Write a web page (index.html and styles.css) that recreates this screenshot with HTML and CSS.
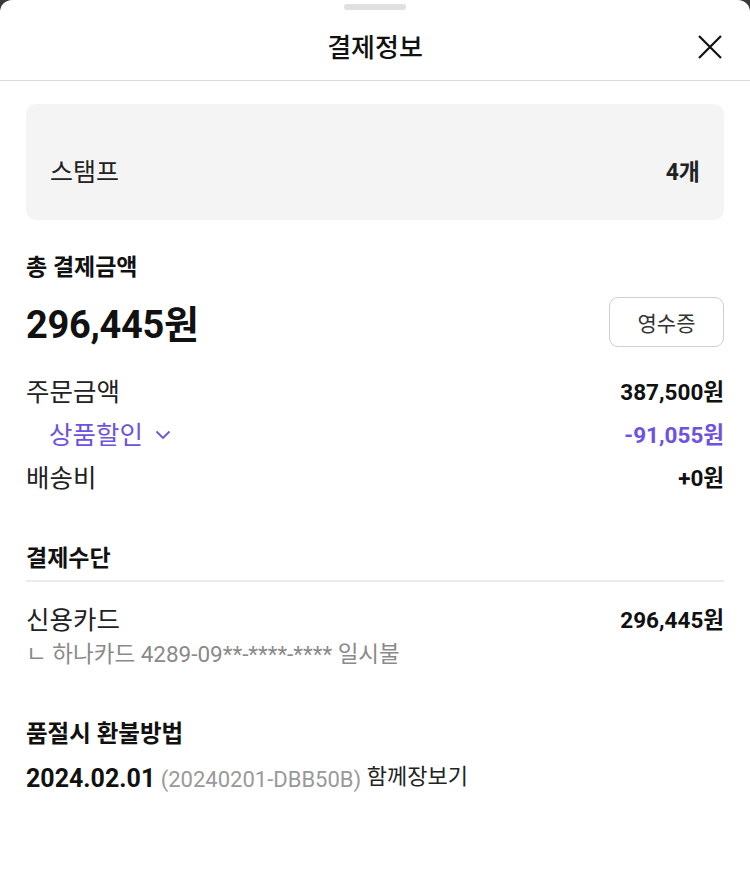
FILE: index.html
```html
<!DOCTYPE html>
<html lang="ko">

<head>
  <meta charset="utf-8">
  <title>결제정보</title>
  <link rel="stylesheet" href="styles.css">
</head>

<body>
  <div class="sheet">
    <div class="handle"></div>
    <header class="sheet-head">
      <h1>결제정보</h1>
      <button class="close" aria-label="닫기">
        <svg width="26" height="26" viewBox="0 0 26 26">
          <path d="M2 2 L24 24 M24 2 L2 24" stroke="#111" stroke-width="2.2" fill="none" />
        </svg>
      </button>
    </header>

    <div class="sheet-body">
      <!-- stamp -->
      <div class="stamp-box">
        <span>스탬프</span>
        <strong>4개</strong>
      </div>

      <!-- total -->
      <section class="total">
        <h2>총 결제금액</h2>
        <div class="total-row">
          <span class="total-price">296,445원</span>
          <button class="receipt">영수증</button>
        </div>
        <div class="row">
          <span>주문금액</span>
          <strong>387,500원</strong>
        </div>
        <div class="row sub purple">
          <span>상품할인
            <svg class="chevron" width="16" height="10" viewBox="0 0 16 10">
              <path d="M1.5 1.5 L8 8 L14.5 1.5" stroke="currentColor" stroke-width="1.8" fill="none" />
            </svg>
          </span>
          <strong>-91,055원</strong>
        </div>
        <div class="row">
          <span>배송비</span>
          <strong>+0원</strong>
        </div>
      </section>

      <!-- payment method -->
      <section class="method">
        <h2 class="ruled">결제수단</h2>
        <div class="row">
          <span>신용카드</span>
          <strong>296,445원</strong>
        </div>
        <p class="card-info">ㄴ 하나카드 4289-09**-****-**** 일시불</p>
      </section>

      <!-- refund -->
      <section class="refund">
        <h2>품절시 환불방법</h2>
        <p class="order-line">
          <strong>2024.02.01</strong>
          <span class="order-no">(20240201-DBB50B)</span>
          <span class="shop">함께장보기</span>
        </p>
        <p class="refund-text">주문 취소 시 결제하신 수단으로 환불됩니다.</p>
      </section>
    </div>
  </div>
</body>

</html>
```

FILE: styles.css
```css
html,
body {
  margin: 0;
  padding: 0;
  background: #3a3a3a;
}

body {
  font-family: Roboto, "Noto Sans CJK KR", sans-serif;
  color: #222;
}

.sheet {
  width: 750px;
  height: 893px;
  background: #fff;
  border-radius: 12px 12px 0 0;
  overflow: hidden;
}

.handle {
  width: 62px;
  height: 6px;
  margin: 4px auto 0;
  border-radius: 3px;
  background: #e0e0e0;
}

.sheet-head {
  height: 70px;
  display: flex;
  align-items: center;
  justify-content: center;
  position: relative;
  border-bottom: 1px solid #dcdcdc;
}

.sheet-head h1 {
  margin: 0;
  font-size: 26px;
  font-weight: 500;
  color: #111;
}

.close {
  position: absolute;
  right: 27px;
  top: 24px;
  border: none;
  background: none;
  padding: 0;
  width: 26px;
  height: 26px;
}

.sheet-body {
  padding: 23px 26px 0;
  height: 725px;
  box-sizing: border-box;
  overflow: hidden;
}

.stamp-box {
  height: 116px;
  background: #f4f4f4;
  border-radius: 10px;
  padding: 22px 24px 0;
  box-sizing: border-box;
  display: flex;
  align-items: center;
  justify-content: space-between;
  font-size: 25px;
  line-height: 30px;
}

.stamp-box strong {
  font-weight: 700;
  font-size: 23px;
}

h2 {
  margin: 0;
  font-size: 23px;
  line-height: 30px;
  font-weight: 700;
  color: #111;
}

.total {
  padding-top: 33px;
}

.total-row {
  display: flex;
  justify-content: space-between;
  align-items: center;
  margin-top: 11px;
  margin-bottom: 28px;
}

.total-price {
  font-size: 38px;
  font-weight: 700;
  color: #111;
  letter-spacing: -0.3px;
}

.receipt {
  width: 115px;
  height: 50px;
  border: 1px solid #cfcfcf;
  border-radius: 9px;
  background: #fff;
  font-family: inherit;
  font-size: 21px;
  color: #333;
}

.row {
  display: flex;
  justify-content: space-between;
  align-items: center;
  font-size: 25.5px;
  line-height: 30px;
  height: 30px;
  margin-bottom: 13px;
}

.row strong {
  font-size: 22.5px;
  font-weight: 700;
  color: #111;
}

.row.sub span {
  padding-left: 23px;
  display: flex;
  align-items: center;
  gap: 12px;
}

.purple,
.purple strong {
  color: #6e52e0;
}

.method {
  padding-top: 38px;
}

.ruled {
  padding-bottom: 6px;
  border-bottom: 2px solid #ebebeb;
  margin-bottom: 23px;
}

.card-info {
  margin: -9px 0 0;
  font-size: 22.5px;
  line-height: 30px;
  color: #8a8a8a;
}

.refund {
  padding-top: 50px;
}

.refund h2 {
  font-size: 23.5px;
}

.order-line {
  margin: 13px 0 0;
  font-size: 22px;
  line-height: 30px;
}

.order-line strong {
  font-size: 25px;
  font-weight: 700;
  color: #111;
}

.order-no {
  color: #999;
}

.shop {
  vertical-align: 3px;
}

.refund-text {
  margin: 10px 0 0;
  font-size: 21px;
  line-height: 26px;
  color: #555;
}
```
